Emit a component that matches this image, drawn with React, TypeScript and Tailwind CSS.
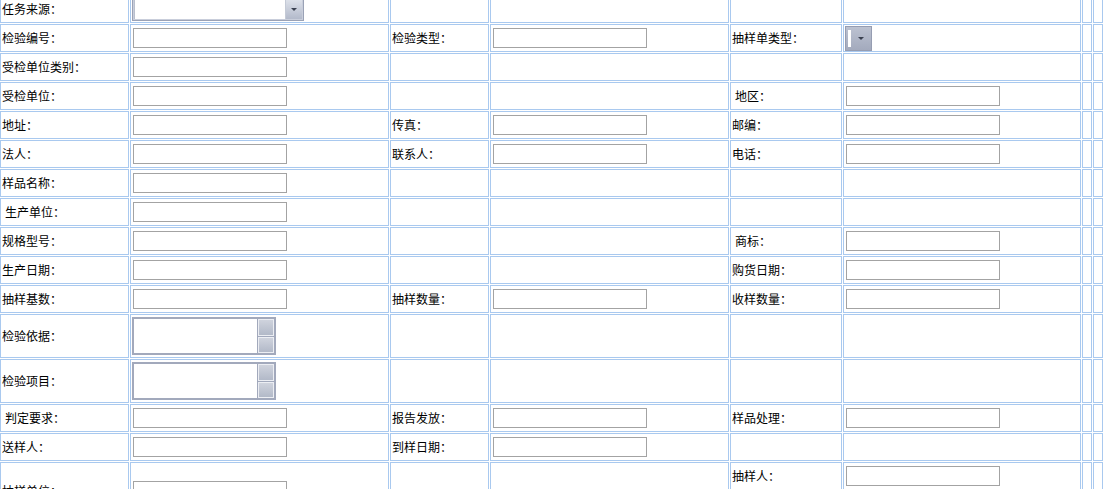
import React from "react";

type Cell =
  | { t: "label"; text: string; indent?: boolean }
  | { t: "input" }
  | { t: "empty" }
  | { t: "combo" }
  | { t: "mini" }
  | { t: "list" };

const L = (text: string, indent = false): Cell => ({ t: "label", text, indent });
const I: Cell = { t: "input" };
const E: Cell = { t: "empty" };

const rows: Cell[][] = [
  [L("任务来源："), { t: "combo" }, E, E, E, E, E, E],
  [L("检验编号："), I, L("检验类型："), I, L("抽样单类型："), { t: "mini" }, E, E],
  [L("受检单位类别："), I, E, E, E, E, E, E],
  [L("受检单位："), I, E, E, L("地区：", true), I, E, E],
  [L("地址："), I, L("传真："), I, L("邮编："), I, E, E],
  [L("法人："), I, L("联系人："), I, L("电话："), I, E, E],
  [L("样品名称："), I, E, E, E, E, E, E],
  [L("生产单位：", true), I, E, E, E, E, E, E],
  [L("规格型号："), I, E, E, L("商标：", true), I, E, E],
  [L("生产日期："), I, E, E, L("购货日期："), I, E, E],
  [L("抽样基数："), I, L("抽样数量："), I, L("收样数量："), I, E, E],
  [L("检验依据："), { t: "list" }, E, E, E, E, E, E],
  [L("检验项目："), { t: "list" }, E, E, E, E, E, E],
  [L("判定要求：", true), I, L("报告发放："), I, L("样品处理："), I, E, E],
  [L("送样人："), I, L("到样日期："), I, E, E, E, E],
];

function TextBox() {
  return (
    <input
      type="text"
      readOnly
      className="ml-px block w-[154px] h-[20px] border border-[#a3a3a3] bg-white outline-none"
    />
  );
}

function Arrow() {
  return (
    <span className="block w-0 h-0 border-l-[3px] border-r-[3px] border-t-[3px] border-l-transparent border-r-transparent border-t-[#3a4050]" />
  );
}

function Combo() {
  return (
    <div className="flex w-[172px] h-[24px] border border-[#9aa2b6] bg-[#c9cedb] p-px">
      <div className="flex-1 bg-white border-t border-l border-[#b9bfcd]" />
      <div className="w-[17px] flex items-center justify-center bg-gradient-to-b from-[#dfe3eb] to-[#b3bacb] border-l border-[#c4cad6]">
        <Arrow />
      </div>
    </div>
  );
}

function Mini() {
  return (
    <div className="flex items-center w-[27px] h-[25px] border border-[#969db2] bg-gradient-to-b from-[#bcc2d1] to-[#a3aabd] pl-[2px]">
      <div className="w-[3px] h-[17px] bg-white" />
      <div className="flex-1 flex items-center justify-center">
        <Arrow />
      </div>
    </div>
  );
}

function ListBox() {
  return (
    <div className="flex w-[144px] h-[38px] border-2 border-[#a2a9bc] bg-white">
      <div className="flex-1 border-r border-[#a2a9bc]" />
      <div className="w-[16px] flex flex-col gap-px bg-[#a2a9bc]">
        <div className="flex-1 border border-[#eceef3] bg-gradient-to-b from-[#cfd3dd] to-[#b2b9c8]" />
        <div className="flex-1 border border-[#eceef3] bg-gradient-to-b from-[#cfd3dd] to-[#b2b9c8]" />
      </div>
    </div>
  );
}

function Content({ c }: { c: Cell }) {
  switch (c.t) {
    case "label":
      return (
        <span className={`whitespace-nowrap ${c.indent ? "pl-[3px]" : ""}`}>{c.text}</span>
      );
    case "input":
      return <TextBox />;
    case "combo":
      return <Combo />;
    case "mini":
      return <Mini />;
    case "list":
      return <ListBox />;
    default:
      return null;
  }
}

const cellCls = "flex items-center border border-[#a9c9ef] bg-white pl-px overflow-hidden";

export default function App() {
  return (
    <div className="w-[1104px] h-[489px] overflow-hidden bg-white text-[12px] leading-[14px] text-black font-['Noto_Sans_CJK_SC','Noto_Sans',sans-serif]">
      <div className="-mt-[5px] grid grid-cols-[129px_259px_99px_239px_112px_238px_10px_10px] grid-rows-[repeat(11,28px)_44px_44px_repeat(4,28px)] gap-px">
        {rows.map((r, ri) =>
          r.map((c, ci) => (
            <div key={`${ri}-${ci}`} className={cellCls}>
              <Content c={c} />
            </div>
          ))
        )}
        {/* last block: 抽样单位 spans two rows */}
        <div className={`${cellCls} row-span-2`}>
          <span className="whitespace-nowrap">抽样单位：</span>
        </div>
        <div className={`${cellCls} row-span-2`}>
          <TextBox />
        </div>
        <div className={`${cellCls} row-span-2`} />
        <div className={`${cellCls} row-span-2`} />
        <div className={cellCls}>
          <span className="whitespace-nowrap">抽样人：</span>
        </div>
        <div className={cellCls}>
          <TextBox />
        </div>
        <div className={`${cellCls} row-span-2`} />
        <div className={`${cellCls} row-span-2`} />
        <div className={cellCls} />
        <div className={cellCls} />
      </div>
    </div>
  );
}
